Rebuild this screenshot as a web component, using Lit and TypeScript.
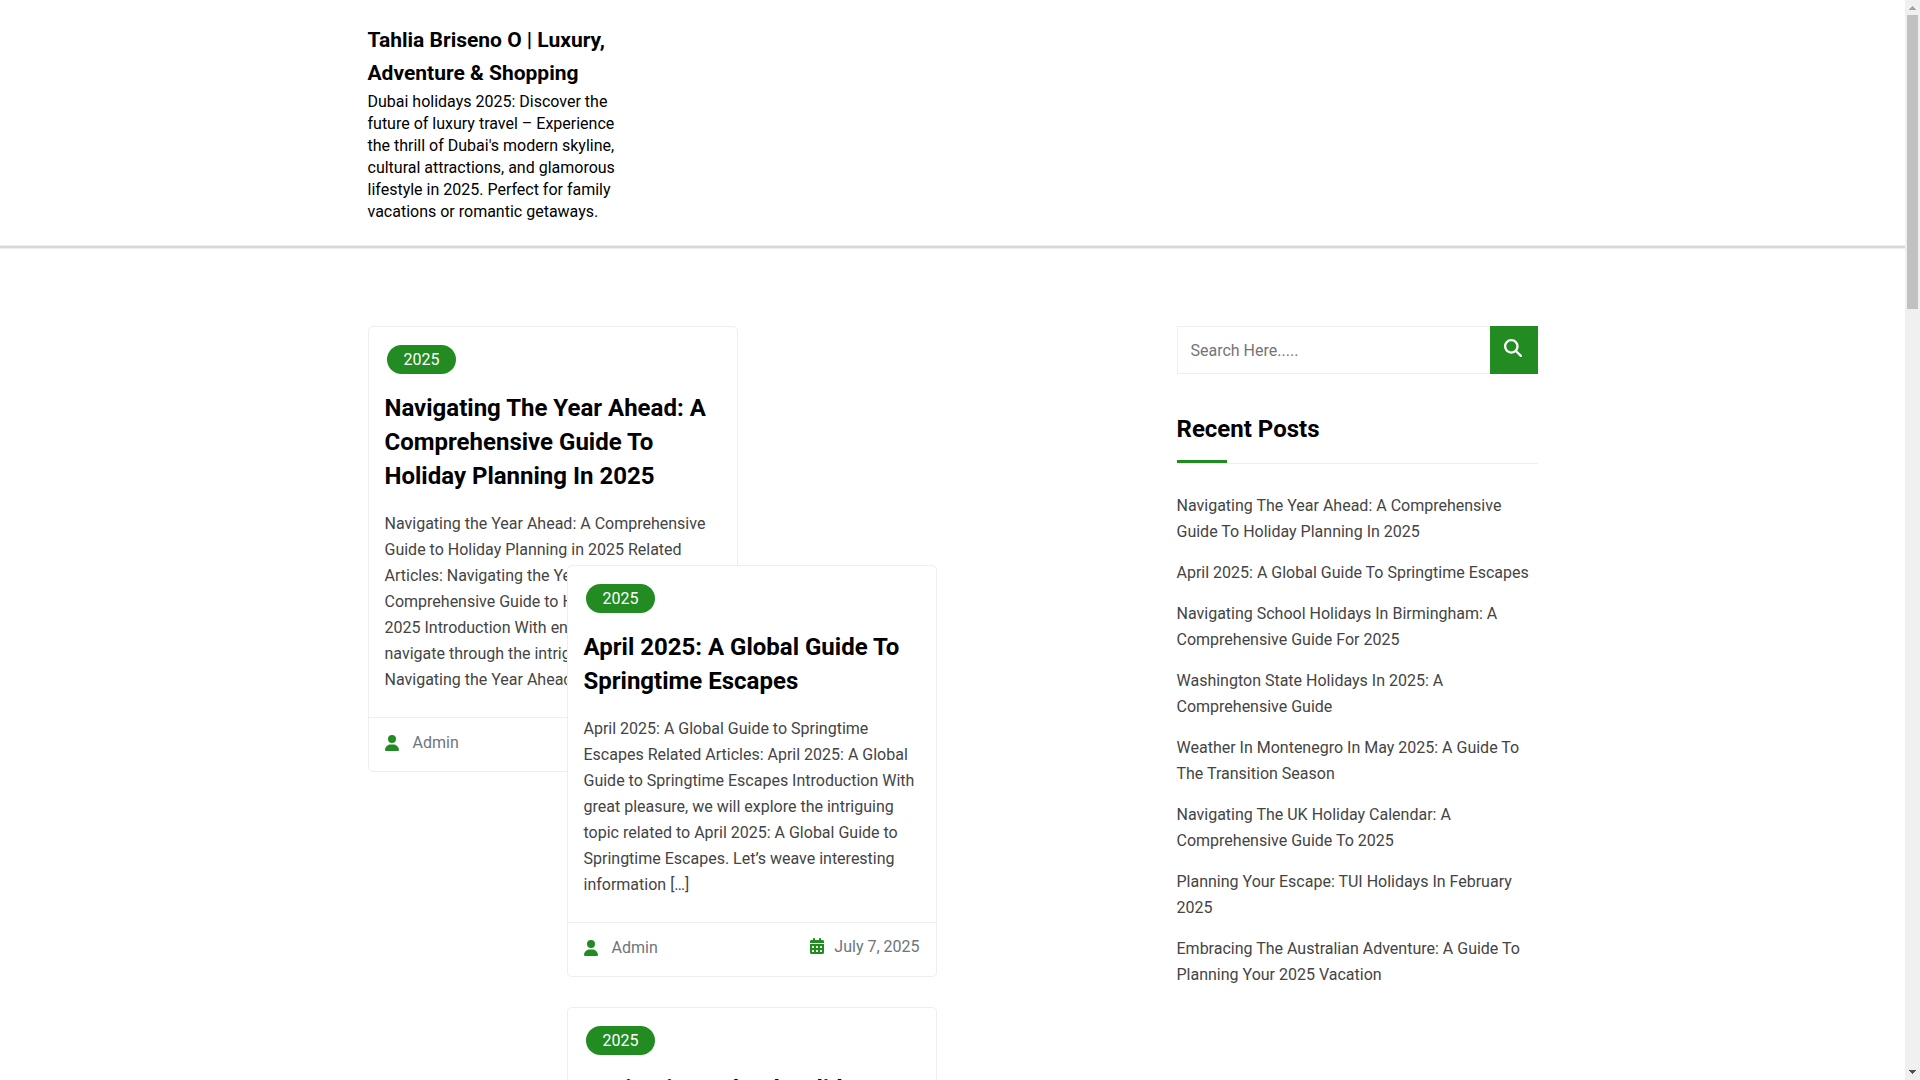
import { LitElement, html, css, svg } from "lit";
import { customElement, property } from "lit/decorators.js";

interface Post {
  title: string;
  excerpt: string;
  author: string;
  date: string;
  category: string;
}

const posts: Post[] = [
  {
    title: "Navigating The Year Ahead: A Comprehensive Guide To Holiday Planning In 2025",
    excerpt:
      "Navigating the Year Ahead: A Comprehensive Guide to Holiday Planning in 2025 Related Articles: Navigating the Year Ahead: A Comprehensive Guide to Holiday Planning in 2025 Introduction With enthusiasm, let’s navigate through the intriguing topic related to Navigating the Year Ahead: A […]",
    author: "Admin",
    date: "July 7, 2025",
    category: "2025",
  },
  {
    title: "April 2025: A Global Guide To Springtime Escapes",
    excerpt:
      "April 2025: A Global Guide to Springtime Escapes Related Articles: April 2025: A Global Guide to Springtime Escapes Introduction With great pleasure, we will explore the intriguing topic related to April 2025: A Global Guide to Springtime Escapes. Let’s weave interesting information […]",
    author: "Admin",
    date: "July 7, 2025",
    category: "2025",
  },
  {
    title: "Navigating School Holidays In Birmingham: A Comprehensive Guide For 2025",
    excerpt:
      "Navigating School Holidays in Birmingham: A Comprehensive Guide for 2025 […]",
    author: "Admin",
    date: "July 7, 2025",
    category: "2025",
  },
];

const recentPosts = [
  "Navigating The Year Ahead: A Comprehensive Guide To Holiday Planning In 2025",
  "April 2025: A Global Guide To Springtime Escapes",
  "Navigating School Holidays In Birmingham: A Comprehensive Guide For 2025",
  "Washington State Holidays In 2025: A Comprehensive Guide",
  "Weather In Montenegro In May 2025: A Guide To The Transition Season",
  "Navigating The UK Holiday Calendar: A Comprehensive Guide To 2025",
  "Planning Your Escape: TUI Holidays In February 2025",
  "Embracing The Australian Adventure: A Guide To Planning Your 2025 Vacation",
];

const userIcon = html`<svg class="icon" viewBox="0 0 448 512" aria-hidden="true">
  <path d="M224 256A128 128 0 1 0 224 0a128 128 0 1 0 0 256zm-45.700 48C79.800 304 0 383.800 0 482.300C0 498.700 13.300 512 29.700 512H418.300c16.400 0 29.700-13.300 29.700-29.700C448 383.800 368.200 304 269.700 304H178.300z" />
</svg>`;

const dayCell = (x: number, y: number) =>
  svg`<rect class="day" x=${x} y=${y} width="64" height="64" rx="16" />`;

const calendarIcon = html`<svg class="icon calendar" viewBox="0 0 448 512" aria-hidden="true">
  <path d="M128 0c17.700 0 32 14.300 32 32V64H288V32c0-17.700 14.300-32 32-32s32 14.300 32 32V64h48c26.500 0 48 21.500 48 48v48H0V112C0 85.500 21.500 64 48 64H96V32c0-17.700 14.300-32 32-32zM0 192H448V464c0 26.500-21.500 48-48 48H48c-26.500 0-48-21.500-48-48V192z" />
  ${[256, 384].map((y) => [64, 192, 320].map((x) => dayCell(x, y)))}
</svg>`;

const searchIcon = html`<svg class="glass" viewBox="0 0 512 512" aria-hidden="true">
  <path d="M416 208c0 45.900-14.900 88.300-40 122.700L502.600 457.400c12.500 12.500 12.500 32.800 0 45.300s-32.800 12.500-45.300 0L330.700 376c-34.400 25.200-76.800 40-122.700 40C93.100 416 0 322.900 0 208S93.100 0 208 0S416 93.100 416 208zM208 352a144 144 0 1 0 0-288 144 144 0 1 0 0 288z" />
</svg>`;

@customElement("post-card")
class PostCard extends LitElement {
  @property({ attribute: false }) post!: Post;

  static styles = css`
    :host {
      display: block;
      box-sizing: border-box;
      border: 1px solid #eee;
      border-radius: 5px;
      background: #fff;
    }
    a {
      color: inherit;
      text-decoration: none;
    }
    .body {
      padding: 18px 16px 24px;
    }
    .badge {
      display: block;
      width: fit-content;
      margin-left: 2px;
      padding: 0 17px;
      border-radius: 15px;
      background: #228b22;
      color: #fff;
      line-height: 29px;
    }
    .title {
      margin: 17px 0 18px;
      color: #000;
      font-size: 24px;
      font-weight: 700;
      line-height: 34px;
    }
    .excerpt {
      margin: 0;
      color: #444;
      line-height: 26px;
    }
    .meta {
      display: flex;
      justify-content: space-between;
      align-items: center;
      height: 54px;
      padding: 0 16px 4px;
      border-top: 1px solid #eee;
      color: #6c757d;
      box-sizing: border-box;
    }
    .author,
    .date {
      display: flex;
      align-items: center;
      line-height: 20px;
    }
    .author {
      gap: 14px;
    }
    .date {
      gap: 10px;
      padding-bottom: 2px;
    }
    .icon {
      width: 14px;
      height: 16px;
      fill: #228b22;
    }
    .calendar {
      padding-bottom: 2px;
    }
    .day {
      fill: #fff;
    }
  `;

  render() {
    const p = this.post;
    return html`
      <article>
        <div class="body">
          <a class="badge" href="#">${p.category}</a>
          <h2 class="title"><a href="#">${p.title}</a></h2>
          <p class="excerpt">${p.excerpt}</p>
        </div>
        <footer class="meta">
          <a class="author" href="#">${userIcon}<span>${p.author}</span></a>
          <span class="date">${calendarIcon}<span>${p.date}</span></span>
        </footer>
      </article>
    `;
  }
}

@customElement("app-root")
class AppRoot extends LitElement {
  static styles = css`
    :host {
      display: flex;
      height: 100vh;
      overflow: hidden;
      background: #fff;
      color: #000;
      font-family: Roboto, "Liberation Sans", sans-serif;
      font-size: 16px;
    }
    a {
      color: inherit;
      text-decoration: none;
    }
    .page {
      flex: 1;
      min-width: 0;
      overflow-y: auto;
      scrollbar-width: none;
    }
    .container {
      max-width: 1170px;
      margin: 0 auto;
    }
    .header {
      padding: 24px 0 23px;
      border-bottom: 2px solid #d8d8d8;
      box-shadow: 0 1px 0 #eee, inset 0 -1px 0 #eee;
    }
    .brand {
      max-width: 270px;
    }
    .site-title {
      margin: 0 0 1px;
      font-size: 21px;
      font-weight: 700;
      line-height: 33px;
    }
    .tagline {
      margin: 0;
      line-height: 22px;
    }
    .content {
      display: grid;
      grid-template-columns: minmax(0, 1fr) 361px;
      align-items: start;
      padding: 78px 0;
    }
    /* Both stacks share one cell, so the second overlaps the first card. */
    .posts {
      display: grid;
      align-items: start;
    }
    .stack {
      grid-area: 1 / 1;
      display: grid;
      gap: 30px;
      width: 370px;
    }
    .shifted {
      margin: 239px 0 0 199px;
    }
    .search {
      display: flex;
      height: 48px;
    }
    .search-input {
      flex: 1;
      min-width: 0;
      box-sizing: border-box;
      padding: 0 13px;
      border: 1px solid #eee;
      border-right: 0;
      border-radius: 0;
      background: #fff;
      color: #444;
      font: inherit;
      outline: none;
    }
    .search-input::placeholder {
      color: #757575;
    }
    .search-button {
      display: flex;
      align-items: center;
      justify-content: center;
      width: 48px;
      padding: 0 1px 4px 0;
      border: 0;
      background: #228b22;
      cursor: pointer;
    }
    .glass {
      width: 18px;
      height: 18px;
      fill: #fff;
    }
    .widget-title {
      margin: 38px 0 29px;
      border-bottom: 1px solid #eee;
      font-size: 24px;
      font-weight: 700;
      line-height: 34px;
    }
    .widget-title::after {
      content: "";
      display: block;
      width: 50px;
      height: 3px;
      margin-top: 14px;
      background: #228b22;
    }
    .recent {
      display: grid;
      gap: 15px;
      margin: 0;
      padding: 0;
      list-style: none;
      color: #444;
      line-height: 26px;
    }
    .scrollbar {
      display: flex;
      flex-direction: column;
      width: 15px;
      background: #f0f0f0;
    }
    .arrow {
      flex: none;
      width: 15px;
      height: 15px;
    }
    .up {
      fill: #a3a3a3;
    }
    .down {
      fill: #505050;
    }
    .track {
      flex: 1;
      padding: 0 2px;
    }
    .thumb {
      height: 28%;
      background: #c1c1c1;
    }
  `;

  render() {
    const [first, ...rest] = posts;
    return html`
      <div class="page">
        <header class="header">
          <div class="container">
            <div class="brand">
              <h1 class="site-title"><a href="#">Tahlia Briseno O | Luxury, Adventure &amp; Shopping</a></h1>
              <p class="tagline">Dubai holidays 2025: Discover the future of luxury travel – Experience the thrill of Dubai's modern skyline, cultural attractions, and glamorous lifestyle in 2025. Perfect for family vacations or romantic getaways.</p>
            </div>
          </div>
        </header>
        <div class="container content">
          <main class="posts">
            <div class="stack"><post-card .post=${first}></post-card></div>
            <div class="stack shifted">
              ${rest.map((p) => html`<post-card .post=${p}></post-card>`)}
            </div>
          </main>
          <aside>
            <form class="search" role="search">
              <input class="search-input" type="search" aria-label="Search" placeholder="Search Here....." />
              <button class="search-button" type="button" aria-label="Search">${searchIcon}</button>
            </form>
            <h2 class="widget-title">Recent Posts</h2>
            <ul class="recent">
              ${recentPosts.map((t) => html`<li><a href="#">${t}</a></li>`)}
            </ul>
          </aside>
        </div>
      </div>
      <div class="scrollbar" aria-hidden="true">
        <svg class="arrow up" viewBox="0 0 15 15"><path d="M7 6h1v1h1v1h1v1h1v1H4V9h1V8h1V7h1z" /></svg>
        <div class="track"><div class="thumb"></div></div>
        <svg class="arrow down" viewBox="0 0 15 15"><path d="M4 5h7v1h-1v1h-1v1H8v1H7V8H6V7H5V6H4z" /></svg>
      </div>
    `;
  }
}
